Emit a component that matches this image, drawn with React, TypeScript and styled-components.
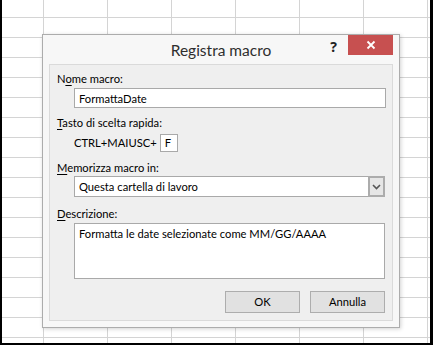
import React from "react";
import styled, { createGlobalStyle } from "styled-components";

const GlobalStyle = createGlobalStyle`
  html, body {
    margin: 0;
    padding: 0;
    background: #fff;
  }
  body {
    font-family: Lato, "Noto Sans", sans-serif;
  }
`;

const Sheet = styled.div`
  position: relative;
  width: 433px;
  height: 345px;
  box-sizing: border-box;
  border-left: 2px solid #000;
  border-right: 3px solid #000;
  border-bottom: 2px solid #000;
  background-color: #fff;
  background-image: linear-gradient(to right, #d4d4d4 1px, transparent 1px),
    linear-gradient(to bottom, #d4d4d4 1px, transparent 1px);
  background-size: 64px 100%, 100% 20px;
  background-position: 41px 0, 0 17px;
  overflow: hidden;
`;

const Dialog = styled.div`
  position: absolute;
  left: 40px;
  top: 34px;
  width: 358px;
  height: 294px;
  box-sizing: border-box;
  border: 1px solid #acacac;
  background: #f7f7f7;
  box-shadow: 1px 1px 4px rgba(0, 0, 0, 0.18);
  display: flex;
  flex-direction: column;
`;

const TitleBar = styled.div`
  position: relative;
  height: 29px;
  flex-shrink: 0;
  display: flex;
  align-items: flex-start;
  justify-content: flex-end;
  padding-right: 6px;
`;

const Title = styled.div`
  position: absolute;
  left: 0;
  right: 0;
  top: 5px;
  text-align: center;
  font-family: Lato, sans-serif;
  font-size: 15.5px;
  line-height: 20px;
  color: #2e2e2e;
  pointer-events: none;
`;

const Help = styled.span`
  font-family: "Noto Sans", sans-serif;
  font-weight: 700;
  font-size: 14px;
  line-height: 20px;
  color: #222;
  margin-right: 11px;
  margin-top: 2px;
`;

const CloseButton = styled.div`
  width: 45px;
  height: 20px;
  background: #c75050;
  display: flex;
  align-items: center;
  justify-content: center;
`;

const Panel = styled.div`
  flex: 1;
  margin: 0 6px 6px;
  border: 1px solid #dadada;
  background: #efefef;
  padding: 6px 6px 0 7px;
  display: flex;
  flex-direction: column;
  font-size: 11.2px;
`;

const Label = styled.div<{ $gap?: number }>`
  line-height: 16px;
  color: #000;
  margin-top: ${(p) => p.$gap ?? 0}px;
  u {
    text-decoration: underline;
    text-underline-offset: 2px;
  }
`;

const Indent = styled.div<{ $gap?: number }>`
  margin-left: 17px;
  margin-top: ${(p) => p.$gap ?? 0}px;
`;

const TextBox = styled.div<{ $height: number }>`
  box-sizing: border-box;
  height: ${(p) => p.$height}px;
  border: 1px solid #a9a9a9;
  background: #fff;
  padding: 2px 4px 1px;
  line-height: 15px;
  color: #000;
`;

const ShortcutRow = styled.div`
  display: flex;
  align-items: center;
  line-height: 16px;
  color: #000;
`;

const KeyBox = styled.div`
  box-sizing: border-box;
  width: 18px;
  height: 18px;
  margin-left: 3px;
  border: 1px solid #a9a9a9;
  background: #fff;
  padding-left: 4px;
  line-height: 16px;
`;

const Select = styled.div`
  box-sizing: border-box;
  height: 21px;
  width: 311px;
  border: 1px solid #a9a9a9;
  background: #fff;
  display: flex;
  align-items: stretch;
  color: #000;
`;

const SelectText = styled.div`
  flex: 1;
  padding: 2px 4px;
  line-height: 15px;
`;

const DropButton = styled.div`
  box-sizing: border-box;
  width: 17px;
  margin: -1px -1px -1px 0;
  border: 2px solid #acacac;
  background: #e6e6e6;
  display: flex;
  align-items: center;
  justify-content: center;
`;

const Buttons = styled.div`
  display: flex;
  justify-content: flex-end;
  gap: 10px;
  margin-top: 12px;
  margin-left: 17px;
  width: 311px;
`;

const Button = styled.div`
  box-sizing: border-box;
  width: 75px;
  height: 22px;
  border: 1px solid #adadad;
  background: #e1e1e1;
  line-height: 20px;
  text-align: center;
  color: #000;
`;

export default function App() {
  return (
    <>
      <GlobalStyle />
      <Sheet>
        <Dialog>
          <TitleBar>
            <Title>Registra macro</Title>
            <Help>?</Help>
            <CloseButton>
              <svg width="10" height="10" viewBox="0 0 10 10">
                <path d="M1.5 1.5 L8.5 8.5 M8.5 1.5 L1.5 8.5" stroke="#fff" strokeWidth="1.8" />
              </svg>
            </CloseButton>
          </TitleBar>
          <Panel>
            <Label>
              N<u>o</u>me macro:
            </Label>
            <Indent $gap={1} style={{ width: 312 }}>
              <TextBox $height={20}>FormattaDate</TextBox>
            </Indent>
            <Label $gap={7}>
              <u>T</u>asto di scelta rapida:
            </Label>
            <Indent $gap={3}>
              <ShortcutRow>
                CTRL+MAIUSC+
                <KeyBox>F</KeyBox>
              </ShortcutRow>
            </Indent>
            <Label $gap={8}>
              <u>M</u>emorizza macro in:
            </Label>
            <Indent>
              <Select>
                <SelectText>Questa cartella di lavoro</SelectText>
                <DropButton>
                  <svg width="9" height="6" viewBox="0 0 9 6">
                    <path d="M1 1 L4.5 4.5 L8 1" stroke="#555" strokeWidth="1.6" fill="none" />
                  </svg>
                </DropButton>
              </Select>
            </Indent>
            <Label $gap={9}>
              <u>D</u>escrizione:
            </Label>
            <Indent $gap={1} style={{ width: 311 }}>
              <TextBox $height={56}>Formatta le date selezionate come MM/GG/AAAA</TextBox>
            </Indent>
            <Buttons>
              <Button>OK</Button>
              <Button>Annulla</Button>
            </Buttons>
          </Panel>
        </Dialog>
      </Sheet>
    </>
  );
}
